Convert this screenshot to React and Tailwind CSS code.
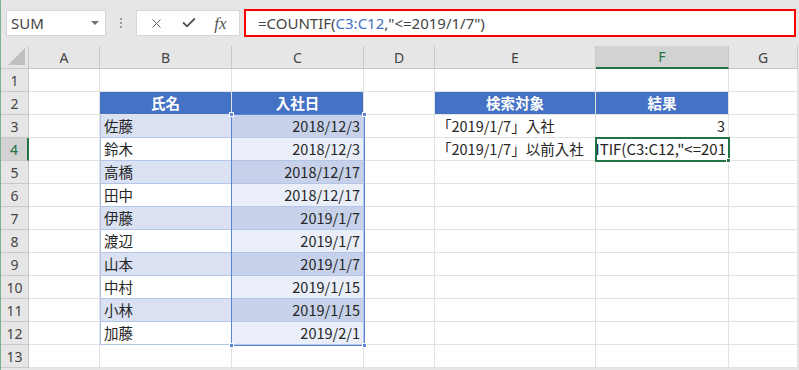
import { X, Check } from "lucide-react";

const COLS = ["A", "B", "C", "D", "E", "F", "G"];

const rows = [
  { name: "佐藤", date: "2018/12/3" },
  { name: "鈴木", date: "2018/12/3" },
  { name: "高橋", date: "2018/12/17" },
  { name: "田中", date: "2018/12/17" },
  { name: "伊藤", date: "2019/1/7" },
  { name: "渡辺", date: "2019/1/7" },
  { name: "山本", date: "2019/1/7" },
  { name: "中村", date: "2019/1/15" },
  { name: "小林", date: "2019/1/15" },
  { name: "加藤", date: "2019/2/1" },
];

const cellFont = { fontFamily: '"Noto Sans CJK JP", "Noto Sans", sans-serif' };
const uiFont = { fontFamily: '"Noto Sans", "Liberation Sans", sans-serif' };

function Cell({ className = "", children }) {
  return (
    <div
      className={`h-[23px] border-r border-b border-[#e1e1e1] flex items-center px-[3px] text-[14.5px] text-[#262626] overflow-hidden whitespace-nowrap ${className}`}
      style={cellFont}
    >
      {children}
    </div>
  );
}

function FormulaBar() {
  return (
    <div className="h-[46px] bg-[#e6e6e6] flex items-start pt-[9px] pl-[5px]" style={uiFont}>
      {/* name box */}
      <div className="mt-[1px] w-[100px] h-[26px] bg-white border border-[#d6d6d6] flex items-center justify-between pl-[4px] pr-[6px]">
        <span className="text-[15px] text-[#444]">SUM</span>
        <span className="w-0 h-0 border-l-[4px] border-r-[4px] border-t-[4px] border-l-transparent border-r-transparent border-t-[#707070]" />
      </div>
      {/* separator dots */}
      <div className="w-[30px] h-[28px] flex flex-col items-center justify-center gap-[2px]">
        <span className="w-[2px] h-[2px] bg-[#9a9a9a]" />
        <span className="w-[2px] h-[2px] bg-[#9a9a9a]" />
        <span className="w-[2px] h-[2px] bg-[#9a9a9a]" />
      </div>
      {/* buttons */}
      <div className="mt-[1px] w-[104px] h-[26px] bg-white border border-[#d6d6d6] flex items-center justify-around px-[4px] text-[#555]">
        <X size={15} strokeWidth={1.5} />
        <Check size={16} strokeWidth={2.8} />
        <span className="text-[17px] italic leading-none" style={{ fontFamily: '"Liberation Serif", serif' }}>
          fx
        </span>
      </div>
      {/* formula box */}
      <div className="ml-[4px] w-[552px] h-[28px] bg-white border-2 border-[#ff0000] flex items-center pl-[12px] text-[15px] text-[#444]">
        =COUNTIF(<span className="text-[#4472c4]">C3:C12</span>,"&lt;=2019/1/7")
      </div>
    </div>
  );
}

export default function App() {
  return (
    <div className="w-[799px] h-[370px] bg-[#e6e6e6] overflow-hidden border-l border-[#7fb08f]">
      <FormulaBar />
      <div className="relative grid grid-cols-[28px_71px_132px_132px_71px_161px_133px_69px] bg-white w-[797px]">
        {/* column header row */}
        <div className="h-[23px] bg-[#e6e6e6] border-r border-b border-[#c8c8c8] flex items-end justify-end p-[3px]">
          <span className="w-0 h-0 border-l-[17px] border-b-[17px] border-l-transparent border-b-[#c0c0c0]" />
        </div>
        {COLS.map((c) =>
          c === "F" ? (
            <div
              key={c}
              className="h-[23px] bg-[#d2d2d2] border-r border-[#c8c8c8] border-b-2 border-b-[#217346] flex items-center justify-center text-[14px] text-[#217346]"
              style={uiFont}
            >
              {c}
            </div>
          ) : (
            <div
              key={c}
              className="h-[23px] bg-[#e6e6e6] border-r border-b border-[#c8c8c8] flex items-center justify-center text-[14px] text-[#444]"
              style={uiFont}
            >
              {c}
            </div>
          )
        )}

        {Array.from({ length: 13 }, (_, i) => {
          const r = i + 1;
          const data = r >= 3 && r <= 12 ? rows[r - 3] : null;
          const odd = r % 2 === 1;
          return [
            <div
              key={`h${r}`}
              className={`h-[23px] border-b flex items-center justify-center text-[14px] ${
                r === 4
                  ? "bg-[#d2d2d2] text-[#217346] border-[#c8c8c8] border-r-2 border-r-[#217346]"
                  : "bg-[#e6e6e6] text-[#444] border-r border-[#c8c8c8]"
              }`}
              style={uiFont}
            >
              {r}
            </div>,
            <Cell key={`a${r}`} />,
            r === 2 ? (
              <Cell key={`b${r}`} className="bg-[#4472c4] border-[#4472c4] justify-center font-bold text-white">
                氏名
              </Cell>
            ) : data ? (
              <Cell
                key={`b${r}`}
                className={`border-l border-l-[#b4c6e7] border-b-[#b4c6e7] border-r-[#b4c6e7] ${odd ? "bg-[#d9e1f2]" : "bg-white"}`}
              >
                {data.name}
              </Cell>
            ) : (
              <Cell key={`b${r}`} />
            ),
            r === 2 ? (
              <Cell key={`c${r}`} className="bg-[#4472c4] border-[#4472c4] justify-center font-bold text-white">
                入社日
              </Cell>
            ) : data ? (
              <Cell
                key={`c${r}`}
                className={`justify-end border-b-[#b4c6e7] border-r-[#b4c6e7] ${odd ? "bg-[#c7d2ea]" : "bg-[#e9eef8]"}`}
              >
                {data.date}
              </Cell>
            ) : (
              <Cell key={`c${r}`} />
            ),
            <Cell key={`d${r}`} />,
            r === 2 ? (
              <Cell key={`e${r}`} className="bg-[#4472c4] border-[#4472c4] justify-center font-bold text-white">
                検索対象
              </Cell>
            ) : r === 3 ? (
              <Cell key={`e${r}`} className="pl-[2px]">「2019/1/7」入社</Cell>
            ) : r === 4 ? (
              <Cell key={`e${r}`} className="pl-[2px]">「2019/1/7」以前入社</Cell>
            ) : (
              <Cell key={`e${r}`} />
            ),
            r === 2 ? (
              <Cell key={`f${r}`} className="bg-[#4472c4] border-[#4472c4] justify-center font-bold text-white">
                結果
              </Cell>
            ) : r === 3 ? (
              <Cell key={`f${r}`} className="justify-end">3</Cell>
            ) : r === 4 ? (
              <Cell key={`f${r}`} className="justify-end pl-0 pr-[2px] text-[15px]">
                ITIF(C3:C12,"&lt;=201
              </Cell>
            ) : (
              <Cell key={`f${r}`} />
            ),
            <Cell key={`g${r}`} />,
          ];
        })}

        {/* reference selection C3:C12 */}
        <div className="absolute left-[230px] top-[68px] w-[134px] h-[232px] border border-[#5b84d4] pointer-events-none">
          <span className="absolute -left-[3px] -top-[3px] w-[5px] h-[5px] bg-[#5b84d4] border border-white" />
          <span className="absolute -right-[3px] -top-[3px] w-[5px] h-[5px] bg-[#5b84d4] border border-white" />
          <span className="absolute -left-[3px] -bottom-[3px] w-[5px] h-[5px] bg-[#5b84d4] border border-white" />
          <span className="absolute -right-[3px] -bottom-[3px] w-[5px] h-[5px] bg-[#5b84d4] border border-white" />
        </div>
        {/* active cell F4 */}
        <div className="absolute left-[594px] top-[91px] w-[135px] h-[25px] border-2 border-[#217346] pointer-events-none">
          <span className="absolute -right-[3px] -bottom-[3px] w-[5px] h-[5px] bg-[#217346] border border-white" />
        </div>
      </div>
    </div>
  );
}
